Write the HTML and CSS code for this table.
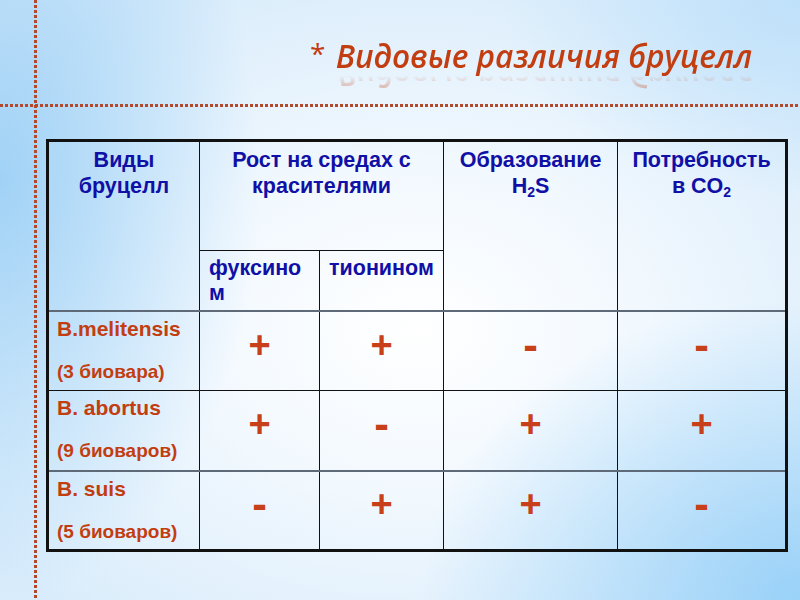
FILE: index.html
```html
<!DOCTYPE html>
<html lang="ru">
<head>
<meta charset="utf-8">
<title>Видовые различия бруцелл</title>
<link rel="stylesheet" href="styles.css">
</head>
<body>
<div class="slide">
  <h1 class="title"><span class="star">*</span> <span class="title-text">Видовые различия бруцелл</span></h1>
  <table class="brucella">
    <colgroup>
      <col class="c1"><col class="c2"><col class="c3"><col class="c4"><col class="c5">
    </colgroup>
    <tr class="head1">
      <th rowspan="2">Виды<br>бруцелл</th>
      <th colspan="2">Рост на средах с<br>красителями</th>
      <th rowspan="2">Образование<br>H<sub>2</sub>S</th>
      <th rowspan="2">Потребность<br>в CO<sub>2</sub></th>
    </tr>
    <tr class="head2">
      <th class="sub">фуксино<br>м</th>
      <th class="sub">тионином</th>
    </tr>
    <tr class="row gray-top">
      <td class="name"><div class="sp">B.melitensis</div><div class="bv">(3 биовара)</div></td>
      <td class="sign">+</td><td class="sign">+</td><td class="sign minus">-</td><td class="sign minus">-</td>
    </tr>
    <tr class="row">
      <td class="name"><div class="sp">B. abortus</div><div class="bv">(9 биоваров)</div></td>
      <td class="sign">+</td><td class="sign minus">-</td><td class="sign">+</td><td class="sign">+</td>
    </tr>
    <tr class="row gray-top">
      <td class="name"><div class="sp">B. suis</div><div class="bv">(5 биоваров)</div></td>
      <td class="sign minus">-</td><td class="sign">+</td><td class="sign">+</td><td class="sign minus">-</td>
    </tr>
  </table>
</div>
</body>
</html>
```

FILE: styles.css
```css
html, body {
  margin: 0;
  padding: 0;
}
body {
  width: 800px;
  height: 600px;
  overflow: hidden;
}
.slide {
  position: relative;
  width: 800px;
  height: 600px;
  box-sizing: border-box;
  padding-top: 31px;
  background:
    radial-gradient(ellipse 260px 420px at 0% 30%, rgba(150,205,245,0.85), rgba(150,205,245,0) 100%),
    radial-gradient(ellipse 380px 300px at 100% 100%, rgba(150,208,248,0.95), rgba(150,208,248,0) 100%),
    radial-gradient(ellipse 300px 200px at 100% 0%, rgba(185,222,250,0.8), rgba(185,222,250,0) 100%),
    radial-gradient(ellipse 520px 380px at 52% 55%, #ffffff 0%, #f1f8fe 45%, #d9ecfb 100%);
  background-color: #d6ebfb;
  font-family: "Liberation Sans", Arial, sans-serif;
}
.slide::before {
  content: "";
  position: absolute;
  left: 34px;
  top: 0;
  width: 3px;
  height: 600px;
  background: repeating-linear-gradient(to bottom, #b5482a 0 3px, transparent 3px 5px);
}
.slide::after {
  content: "";
  position: absolute;
  left: 0;
  top: 104px;
  width: 800px;
  height: 3px;
  background: repeating-linear-gradient(to right, #b5482a 0 3px, transparent 3px 5px);
}
.title {
  margin: 0 0 0 310px;
  height: 44px;
  font-family: "Open Sans", "DejaVu Sans", sans-serif;
  font-weight: 600;
  font-size: 31.6px;
  line-height: 44px;
  color: #c23d10;
  white-space: nowrap;
}
.star {
  font-style: normal;
  font-weight: 400;
  font-size: 28px;
  vertical-align: 4px;
  margin-right: 2px;
}
.title-text {
  display: inline-block;
  font-style: italic;
  line-height: 31px;
  -webkit-box-reflect: below -11px linear-gradient(to bottom, rgba(0,0,0,0.4) 0%, rgba(0,0,0,0) 50%);
}
.brucella {
  margin: 64px 0 0 46px;
  width: 739px;
  border-collapse: collapse;
  border: 3px solid #111;
  table-layout: fixed;
}
.c1 { width: 152px; }
.c2 { width: 120px; }
.c3 { width: 124px; }
.c4 { width: 174px; }
.c5 { width: 169px; }
.brucella th, .brucella td {
  border: 1px solid #111;
  padding: 0;
}
.brucella th {
  color: #1010a6;
  font-weight: bold;
  font-size: 21.5px;
  line-height: 26px;
  vertical-align: top;
  text-align: center;
  padding-top: 5px;
}
.brucella sub {
  font-size: 14px;
  vertical-align: -4px;
  line-height: 0;
}
.head1 { height: 110px; }
.head2 { height: 60px; }
.brucella th.sub {
  text-align: left;
  line-height: 25px;
  padding: 5px 0 0 9px;
}
.row { height: 80px; }
.gray-top td {
  border-top: 2px solid #5e6a78;
}
.name {
  vertical-align: top;
  color: #c23d10;
  font-weight: bold;
  padding: 4px 0 0 8px !important;
}
.sp {
  font-size: 21px;
  line-height: 26px;
}
.bv {
  font-size: 19px;
  line-height: 22px;
  margin-top: 19px;
}
.sign {
  text-align: center;
  vertical-align: middle;
  color: #c8401a;
  font-weight: bold;
  font-size: 38px;
  line-height: 40px;
  padding-bottom: 12px !important;
}
.sign.minus {
  font-size: 44px;
}
```
